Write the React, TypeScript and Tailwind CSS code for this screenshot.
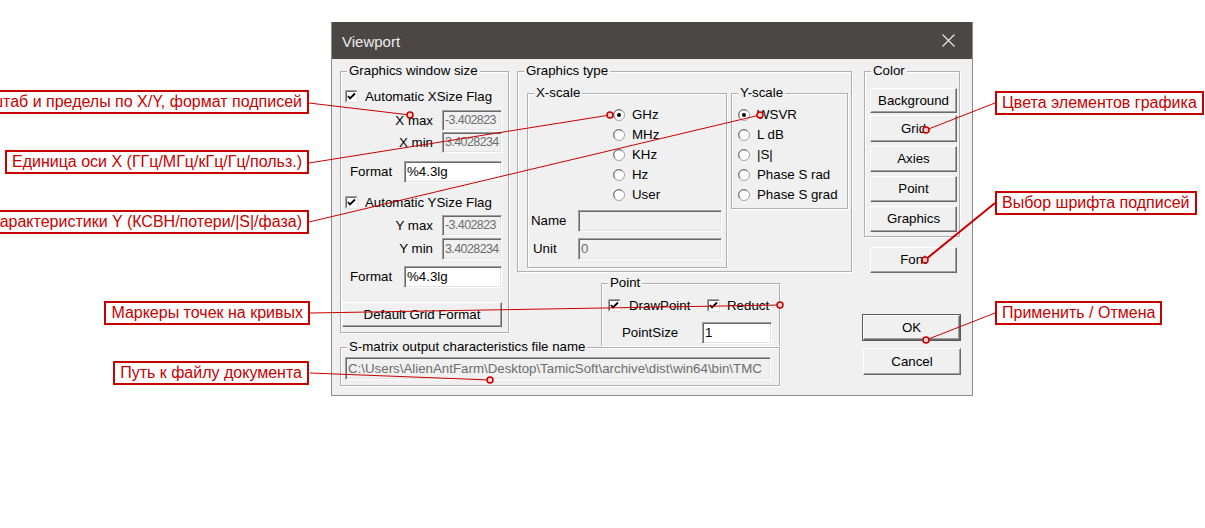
import React from 'react';

// Classic Win32 look-alike controls
const GroupBox: React.FC<{ label: string; className: string; children?: React.ReactNode }> = ({ label, className, children }) => (
  <div className={`relative border border-[#b0b0b0] shadow-[inset_1px_1px_0_#ffffff,1px_1px_0_#ffffff] ${className}`}>
    <span className="absolute left-[6px] top-[-9px] bg-[#f0f0f0] px-[2px] leading-[16px] whitespace-nowrap">{label}</span>
    {children}
  </div>
);

const CheckBox: React.FC<{ checked?: boolean }> = ({ checked }) => (
  <svg width="13" height="13" viewBox="0 0 13 13" className="shrink-0">
    <rect x="0" y="0" width="13" height="13" fill="#ffffff" />
    <path d="M0.5 12.5 V0.5 H12.5" fill="none" stroke="#a0a0a0" />
    <path d="M1.5 11.5 V1.5 H11.5" fill="none" stroke="#696969" />
    <path d="M12.5 0.5 V12.5 H0.5" fill="none" stroke="#e3e3e3" />
    {checked && <polyline points="3,6 5,8.5 10,3.5" fill="none" stroke="#000000" strokeWidth="1.8" />}
  </svg>
);

const Radio: React.FC<{ checked?: boolean }> = ({ checked }) => (
  <svg width="12" height="12" viewBox="0 0 12 12" className="shrink-0">
    <circle cx="6" cy="6" r="5.5" fill="#ffffff" stroke="#a0a0a0" />
    <path d="M2.2 9.2 A4.6 4.6 0 0 1 9.2 2.2" fill="none" stroke="#696969" />
    {checked && <circle cx="6" cy="6" r="2" fill="#000000" />}
  </svg>
);

const TextField: React.FC<{ value?: string; disabled?: boolean; className: string }> = ({ value = '', disabled, className }) => (
  <div
    className={`flex items-center overflow-hidden whitespace-nowrap border border-t-[#a0a0a0] border-l-[#a0a0a0] border-r-[#ffffff] border-b-[#ffffff] shadow-[inset_1px_1px_0_#696969,inset_-1px_-1px_0_#e3e3e3] pl-[2px] ${
      disabled ? 'bg-[#f0f0f0] text-[#6d6d6d]' : 'bg-white text-black'
    } ${className}`}
  >
    {value}
  </div>
);

const WinButton: React.FC<{ label: string; className: string; isDefault?: boolean }> = ({ label, className, isDefault }) => (
  <div className={`${isDefault ? 'border border-[#5a5a5a]' : ''} ${className}`}>
    <div className="flex h-full w-full items-center justify-center border border-t-[#ffffff] border-l-[#ffffff] border-r-[#696969] border-b-[#696969] bg-[#f0f0f0] shadow-[inset_-1px_-1px_0_#a0a0a0]">
      {label}
    </div>
  </div>
);

const RadioRow: React.FC<{ label: string; checked?: boolean }> = ({ label, checked }) => (
  <div className="flex h-[20px] items-center gap-[7px]">
    <Radio checked={checked} />
    <span>{label}</span>
  </div>
);

const Callout: React.FC<{ text: string; className: string }> = ({ text, className }) => (
  <div className={`absolute flex h-[24px] items-center whitespace-nowrap border-2 border-[#c80000] bg-white px-[5px] text-[16px] text-[#c80000] ${className}`}>
    {text}
  </div>
);

const lines = [
  { x1: 309, y1: 103, x2: 410, y2: 115, w: 1 },
  { x1: 309, y1: 163, x2: 610, y2: 115, w: 1 },
  { x1: 309, y1: 222, x2: 760, y2: 115, w: 1 },
  { x1: 310, y1: 313, x2: 780, y2: 305, w: 1 },
  { x1: 310, y1: 373, x2: 490, y2: 380, w: 1 },
  { x1: 995, y1: 103, x2: 926, y2: 130, w: 1 },
  { x1: 995, y1: 203, x2: 925, y2: 260, w: 2 },
  { x1: 995, y1: 313, x2: 926, y2: 340, w: 1 },
];

// narrow numeric fields: the bitmap font of the original is tighter than Arial
const numField = 'ml-[9px] w-[60px] text-[12.5px] tracking-[-0.6px]';

const App: React.FC = () => {
  return (
    <div className="relative h-[528px] w-[1205px] overflow-hidden bg-white font-['Liberation_Sans',Arial,sans-serif]">
      {/* Dialog */}
      <div className="ml-[331px] mt-[22px] flex h-[374px] w-[642px] flex-col border border-t-0 border-[#8a8a8a] bg-[#f0f0f0] text-[13.3px] text-black">
        <div className="flex h-[37px] shrink-0 items-center justify-between bg-[#4b4745] pl-[10px] pr-[17px] pt-[3px] text-[15px] text-[#ececec]">
          <span>Viewport</span>
          <svg width="13" height="13" viewBox="0 0 13 13" className="mb-[3px]">
            <path d="M0.5 0.5 L12.5 12.5 M12.5 0.5 L0.5 12.5" stroke="#e8e8e8" strokeWidth="1.2" />
          </svg>
        </div>

        <div className="flex pl-[8px] pt-[12px]">
          {/* left part */}
          <div className="flex w-[512px] flex-col">
            <div className="flex h-[275px] gap-[8px]">
              <GroupBox label="Graphics window size" className="h-[262px] w-[169px]">
                <div className="flex flex-col">
                  <div className="ml-[4px] mt-[18px] flex h-[13px] items-center gap-[7px]">
                    <CheckBox checked />
                    <span>Automatic XSize Flag</span>
                  </div>
                  <div className="mt-[7px] flex h-[21px] items-center">
                    <span className="w-[92px] text-right">X max</span>
                    <TextField disabled value="-3.402823" className={`h-[21px] ${numField}`} />
                  </div>
                  <div className="mt-[1px] flex h-[21px] items-center">
                    <span className="w-[92px] text-right">X min</span>
                    <TextField disabled value="3.4028234" className={`h-[21px] ${numField}`} />
                  </div>
                  <div className="mt-[8px] flex h-[22px] items-center">
                    <span className="ml-[9px] w-[54px]">Format</span>
                    <TextField value="%4.3lg" className="h-[22px] w-[98px]" />
                  </div>
                  <div className="ml-[4px] mt-[13px] flex h-[13px] items-center gap-[7px]">
                    <CheckBox checked />
                    <span>Automatic YSize Flag</span>
                  </div>
                  <div className="mt-[6px] flex h-[21px] items-center">
                    <span className="w-[92px] text-right">Y max</span>
                    <TextField disabled value="-3.402823" className={`h-[21px] ${numField}`} />
                  </div>
                  <div className="mt-[2px] flex h-[22px] items-center">
                    <span className="w-[92px] text-right">Y min</span>
                    <TextField disabled value="3.4028234" className={`h-[22px] ${numField}`} />
                  </div>
                  <div className="mt-[6px] flex h-[22px] items-center">
                    <span className="ml-[9px] w-[54px]">Format</span>
                    <TextField value="%4.3lg" className="h-[22px] w-[98px]" />
                  </div>
                  <WinButton label="Default Grid Format" className="ml-[1px] mt-[14px] h-[25px] w-[160px]" />
                </div>
              </GroupBox>

              <div className="flex flex-col">
                <GroupBox label="Graphics type" className="flex h-[201px] w-[335px] items-start gap-[4px] pl-[9px] pt-[21px]">
                  <GroupBox label="X-scale" className="h-[175px] w-[200px]">
                    <div className="ml-[85px] mt-[11px] flex flex-col">
                      <RadioRow label="GHz" checked />
                      <RadioRow label="MHz" />
                      <RadioRow label="KHz" />
                      <RadioRow label="Hz" />
                      <RadioRow label="User" />
                    </div>
                    <div className="mt-[5px] flex h-[22px] items-center">
                      <span className="ml-[3px] w-[47px]">Name</span>
                      <TextField disabled className="h-[22px] w-[144px]" />
                    </div>
                    <div className="mt-[6px] flex h-[22px] items-center">
                      <span className="ml-[5px] w-[45px]">Unit</span>
                      <TextField disabled value="0" className="h-[22px] w-[144px]" />
                    </div>
                  </GroupBox>
                  <GroupBox label="Y-scale" className="h-[116px] w-[117px]">
                    <div className="ml-[6px] mt-[11px] flex flex-col">
                      <RadioRow label="WSVR" checked />
                      <RadioRow label="L dB" />
                      <RadioRow label="|S|" />
                      <RadioRow label="Phase S rad" />
                      <RadioRow label="Phase S grad" />
                    </div>
                  </GroupBox>
                </GroupBox>

                <GroupBox label="Point" className="ml-[84px] mt-[11px] h-[63px] w-[179px] border-b-0">
                  <div className="ml-[6px] mt-[15px] flex h-[13px] items-center">
                    <div className="flex w-[99px] items-center gap-[8px]">
                      <CheckBox checked />
                      <span>DrawPoint</span>
                    </div>
                    <div className="flex items-center gap-[7px]">
                      <CheckBox checked />
                      <span>Reduct</span>
                    </div>
                  </div>
                  <div className="mt-[10px] flex h-[22px] items-center">
                    <span className="ml-[20px] w-[80px]">PointSize</span>
                    <TextField value="1" className="h-[22px] w-[70px]" />
                  </div>
                </GroupBox>
              </div>
            </div>

            <GroupBox label="S-matrix output characteristics file name" className="mt-[1px] h-[39px] w-[440px]">
              <TextField
                disabled
                value="C:\Users\AlienAntFarm\Desktop\TamicSoft\archive\dist\win64\bin\TMC"
                className="ml-[4px] mt-[9px] h-[23px] w-[426px]"
              />
            </GroupBox>
          </div>

          {/* right column */}
          <div className="ml-[10px] flex w-[99px] flex-col">
            <GroupBox label="Color" className="ml-[2px] h-[166px] w-[96px]">
              <div className="ml-[5px] mt-[16px] flex flex-col">
                <WinButton label="Background" className="h-[25px] w-[87px]" />
                <WinButton label="Grid" className="mt-[2px] h-[27px] w-[87px]" />
                <WinButton label="Axies" className="mt-[4px] h-[26px] w-[87px]" />
                <WinButton label="Point" className="mt-[4px] h-[26px] w-[87px]" />
                <WinButton label="Graphics" className="mt-[4px] h-[26px] w-[87px]" />
              </div>
            </GroupBox>
            <WinButton label="Font" className="ml-[8px] mt-[10px] h-[26px] w-[87px]" />
            <WinButton label="OK" isDefault className="mt-[41px] h-[27px] w-[99px]" />
            <WinButton label="Cancel" className="ml-[1px] mt-[7px] h-[27px] w-[98px]" />
          </div>
        </div>
      </div>

      {/* Annotation leader lines */}
      <svg className="pointer-events-none absolute left-0 top-0" width="1205" height="528">
        {lines.map((l, i) => (
          <g key={i}>
            <line x1={l.x1} y1={l.y1} x2={l.x2} y2={l.y2} stroke="#c80000" strokeWidth={l.w} />
            <circle cx={l.x2} cy={l.y2} r="3" fill="#f4d0d0" stroke="#c80000" strokeWidth="1.5" />
          </g>
        ))}
      </svg>

      {/* Annotation boxes */}
      <Callout text="Масштаб и пределы по X/Y, формат подписей" className="right-[896px] top-[90px]" />
      <Callout text="Единица оси X (ГГц/МГц/кГц/Гц/польз.)" className="right-[896px] top-[150px]" />
      <Callout text="Тип характеристики Y (КСВН/потери/|S|/фаза)" className="right-[896px] top-[210px]" />
      <Callout text="Маркеры точек на кривых" className="right-[895px] top-[301px]" />
      <Callout text="Путь к файлу документа" className="right-[896px] top-[361px]" />
      <Callout text="Цвета элементов графика" className="left-[995px] top-[91px]" />
      <Callout text="Выбор шрифта подписей" className="left-[995px] top-[191px]" />
      <Callout text="Применить / Отмена" className="left-[995px] top-[301px]" />
    </div>
  );
};

export default App;
